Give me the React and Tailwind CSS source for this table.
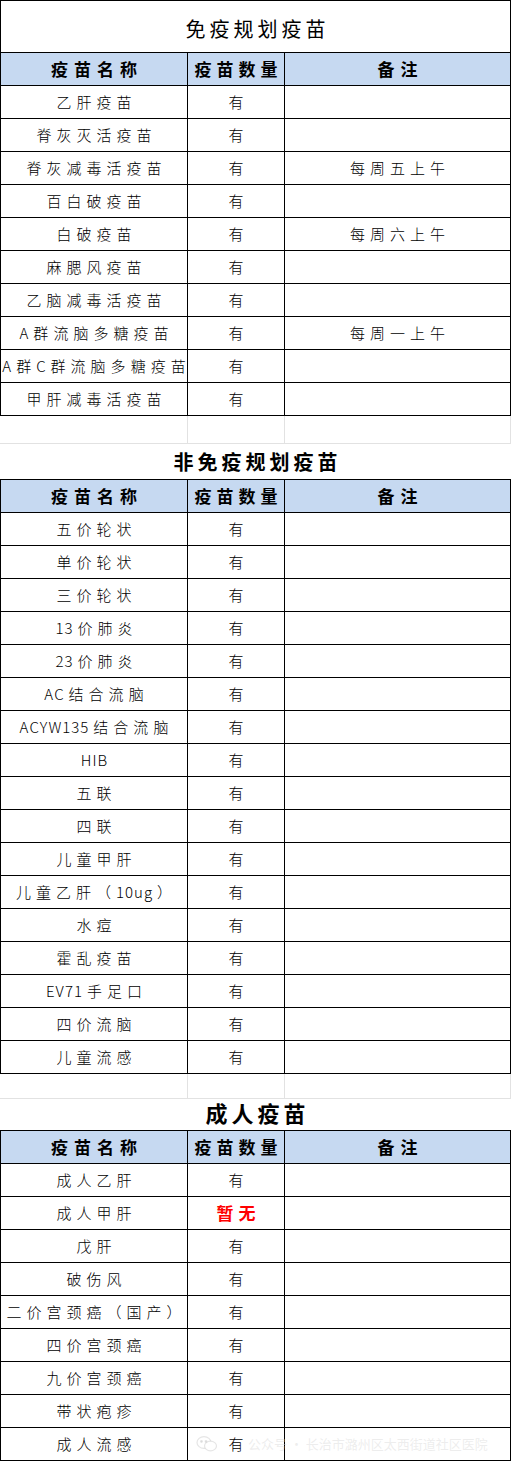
import React from "react";

const FONT = { fontFamily: '"Noto Sans CJK SC", "Noto Sans", sans-serif' };

const sections = [
  {
    title: "免疫规划疫苗",
    titleClass: "h-[52px] border-t border-l border-r border-black items-end pb-[8px] text-[20px] font-normal",
    rows: [
      ["乙肝疫苗", "有", ""],
      ["脊灰灭活疫苗", "有", ""],
      ["脊灰减毒活疫苗", "有", "每周五上午"],
      ["百白破疫苗", "有", ""],
      ["白破疫苗", "有", "每周六上午"],
      ["麻腮风疫苗", "有", ""],
      ["乙脑减毒活疫苗", "有", ""],
      ["A群流脑多糖疫苗", "有", "每周一上午"],
      ["A群C群流脑多糖疫苗", "有", ""],
      ["甲肝减毒活疫苗", "有", ""],
    ],
    blank: "h-[28px]",
  },
  {
    title: "非免疫规划疫苗",
    titleClass: "h-[35px] items-center text-[20px] font-bold",
    rows: [
      ["五价轮状", "有", ""],
      ["单价轮状", "有", ""],
      ["三价轮状", "有", ""],
      ["13价肺炎", "有", ""],
      ["23价肺炎", "有", ""],
      ["AC结合流脑", "有", ""],
      ["ACYW135结合流脑", "有", ""],
      ["HIB", "有", ""],
      ["五联", "有", ""],
      ["四联", "有", ""],
      ["儿童甲肝", "有", ""],
      ["儿童乙肝（10ug）", "有", ""],
      ["水痘", "有", ""],
      ["霍乱疫苗", "有", ""],
      ["EV71手足口", "有", ""],
      ["四价流脑", "有", ""],
      ["儿童流感", "有", ""],
    ],
    blank: "h-[25px]",
  },
  {
    title: "成人疫苗",
    titleClass: "h-[31px] items-end pb-[1px] text-[22px] font-bold",
    rows: [
      ["成人乙肝", "有", ""],
      ["成人甲肝", "暂无", ""],
      ["戊肝", "有", ""],
      ["破伤风", "有", ""],
      ["二价宫颈癌（国产）", "有", ""],
      ["四价宫颈癌", "有", ""],
      ["九价宫颈癌", "有", ""],
      ["带状疱疹", "有", ""],
      ["成人流感", "有", ""],
    ],
  },
];

// 半角字母数字紧凑，汉字加字距（仿表格的等宽排法）
const Spaced = ({ text }) => {
  const chars = Array.from(text);
  return (
    <span className="whitespace-nowrap">
      {chars.map((c, i) => {
        const ascii = /[\x20-\x7e]/.test(c);
        const last = i === chars.length - 1;
        const next = chars[i + 1];
        const nextAscii = next && /[\x20-\x7e]/.test(next);
        let cls = "";
        if (!last) cls = ascii && nextAscii ? "mr-[1px]" : "mr-[5px]";
        return (
          <span key={i} className={cls}>
            {c}
          </span>
        );
      })}
    </span>
  );
};

const Header = () => (
  <div className="grid grid-cols-[188px_97px_226px] h-[34px] bg-[#c6d9f1] border-t border-b border-black text-[17px] font-bold text-black">
    <div className="flex items-center justify-center border-l border-r border-black">
      <span className="tracking-[6px] mr-[-6px]">疫苗名称</span>
    </div>
    <div className="flex items-center justify-center border-r border-black">
      <span className="tracking-[5px] mr-[-5px]">疫苗数量</span>
    </div>
    <div className="flex items-center justify-center border-r border-black">
      <span className="tracking-[6px] mr-[-6px]">备注</span>
    </div>
  </div>
);

const Row = ({ name, qty, note }) => (
  <div className="grid grid-cols-[188px_97px_226px] h-[33px] border-b border-black text-[15px] font-light text-black">
    <div className="flex items-center justify-center border-l border-r border-black overflow-hidden">
      <Spaced text={name} />
    </div>
    <div className="flex items-center justify-center border-r border-black">
      {qty === "暂无" ? (
        <span className="text-[#ff0000] font-bold text-[17px] tracking-[5px] mr-[-5px]">{qty}</span>
      ) : (
        <span>{qty}</span>
      )}
    </div>
    <div className="flex items-center justify-center border-r border-black">
      <span className="tracking-[5px] mr-[-5px]">{note}</span>
    </div>
  </div>
);

const Blank = ({ h }) => (
  <div className={`grid grid-cols-[188px_97px_226px] border-b border-[#e2e2e2] ${h}`}>
    <div className="border-r border-[#e2e2e2]" />
    <div className="border-r border-[#e2e2e2]" />
    <div className="border-r border-[#e2e2e2]" />
  </div>
);

export default function App() {
  return (
    <div className="relative w-[513px] h-[1463px] bg-white overflow-hidden" style={FONT}>
      <div className="w-[511px]">
        {sections.map((s) => (
          <div key={s.title}>
            <div className={`flex justify-center text-black ${s.titleClass}`}>
              <span className="tracking-[4px] mr-[-4px]">{s.title}</span>
            </div>
            <Header />
            {s.rows.map(([name, qty, note]) => (
              <Row key={name} name={name} qty={qty} note={note} />
            ))}
            {s.blank && <Blank h={s.blank} />}
          </div>
        ))}
      </div>

      {/* 水印 */}
      <div className="absolute left-[196px] top-[1432px] w-[314px] h-[24px] flex items-center pointer-events-none">
        <svg width="22" height="18" viewBox="0 0 22 18" fill="none" stroke="rgba(205,205,205,0.5)" strokeWidth="1.2">
          <ellipse cx="8" cy="7.5" rx="7" ry="5.8" />
          <ellipse cx="14.5" cy="11" rx="6" ry="4.8" fill="white" />
          <circle cx="5.5" cy="6.5" r="0.8" fill="rgba(205,205,205,0.5)" />
          <circle cx="10" cy="6.5" r="0.8" fill="rgba(205,205,205,0.5)" />
        </svg>
        <span className="ml-[30px] text-[13px] text-[rgba(215,215,215,0.45)] whitespace-nowrap">
          公众号 · 长治市潞州区太西街道社区医院
        </span>
      </div>
    </div>
  );
}
